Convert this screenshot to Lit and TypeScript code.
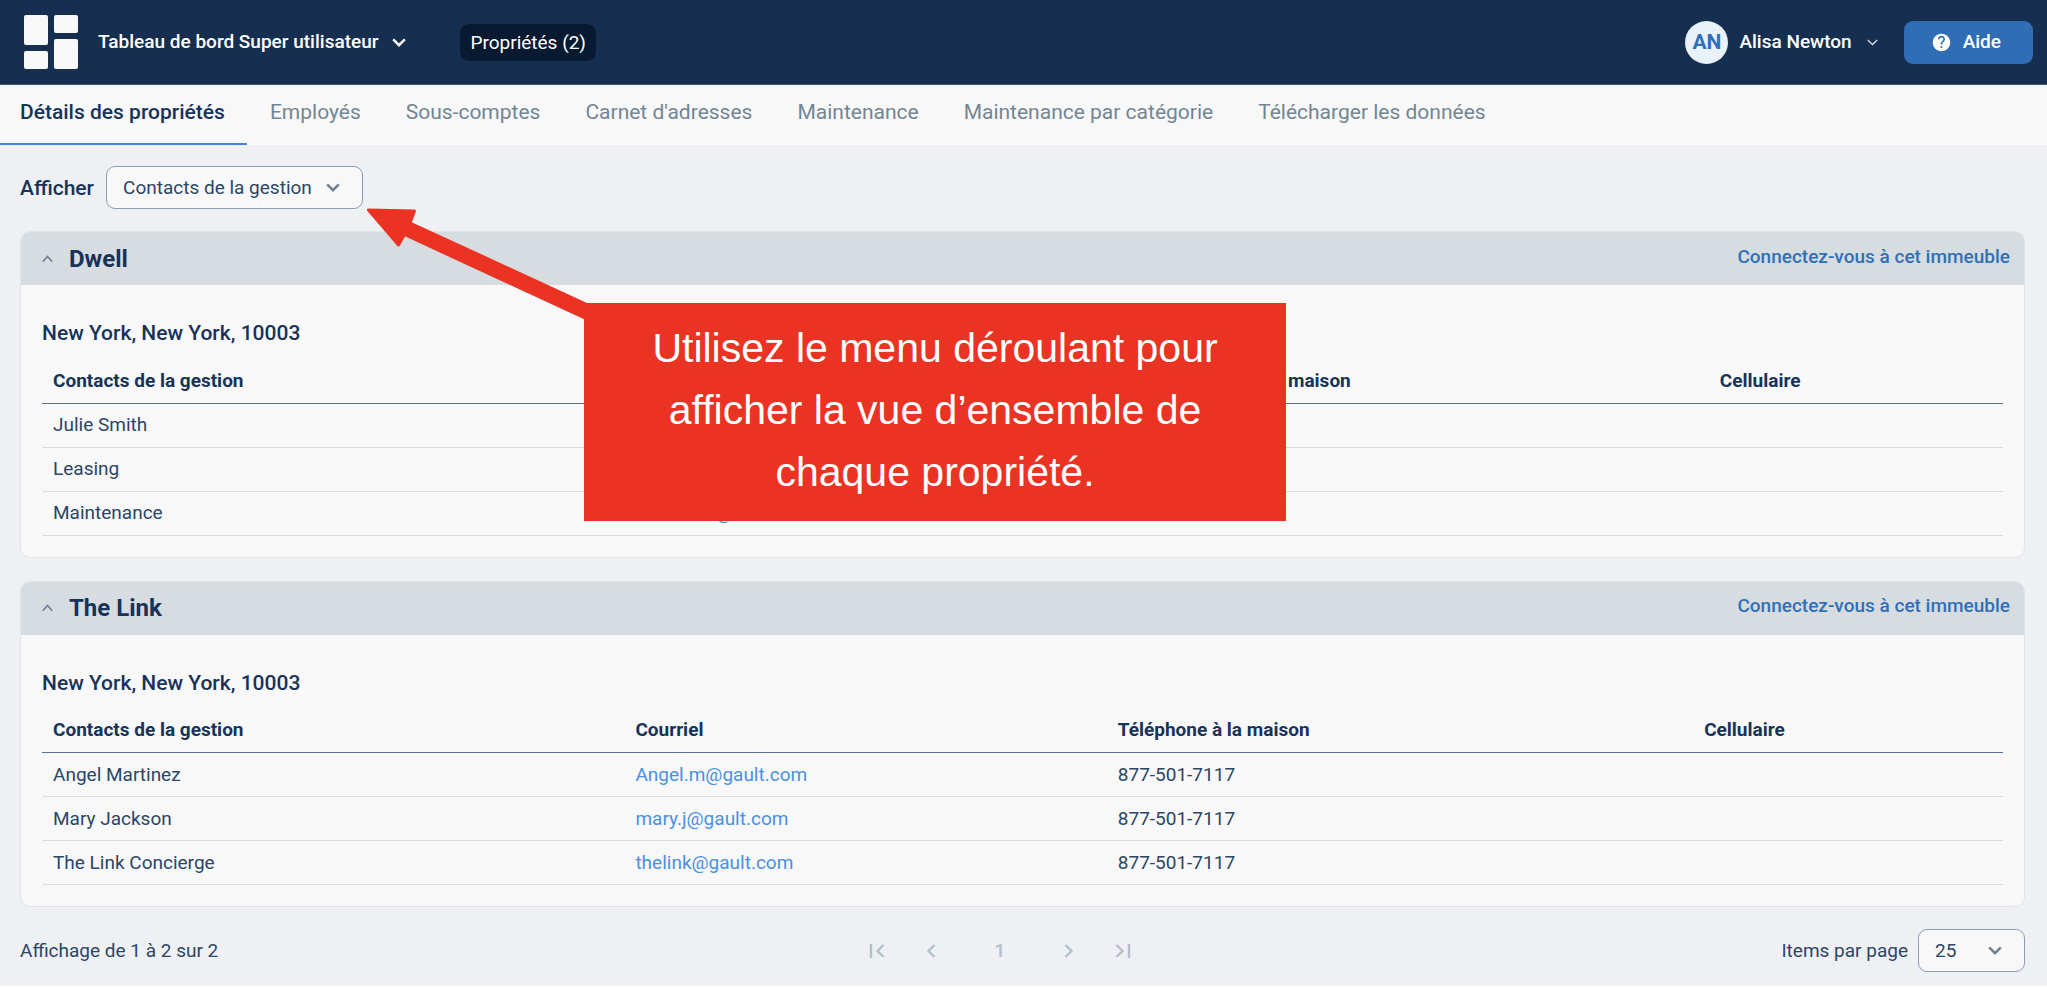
import { LitElement, html, css, svg } from "lit";
import { customElement, property, state } from "lit/decorators.js";
import { classMap } from "lit/directives/class-map.js";

interface Contact {
  name: string;
  email: string;
  home: string;
  cell: string;
}

interface Property {
  name: string;
  address: string;
  columns: number[];
  contacts: Contact[];
}

const TABS = [
  "Détails des propriétés",
  "Employés",
  "Sous-comptes",
  "Carnet d'adresses",
  "Maintenance",
  "Maintenance par catégorie",
  "Télécharger les données",
];

const HEADINGS = ["Contacts de la gestion", "Courriel", "Téléphone à la maison", "Cellulaire"];

const PROPERTIES: Property[] = [
  {
    name: "Dwell",
    address: "New York, New York, 10003",
    columns: [28.2, 28.2, 28.6, 15],
    contacts: [
      { name: "Julie Smith", email: "julie@dwell.com", home: "", cell: "" },
      { name: "Leasing", email: "leasing@dwell.com", home: "", cell: "" },
      { name: "Maintenance", email: "maintenance@dwell.com", home: "", cell: "" },
    ],
  },
  {
    name: "The Link",
    address: "New York, New York, 10003",
    columns: [29.7, 24.6, 29.9, 15.8],
    contacts: [
      { name: "Angel Martinez", email: "Angel.m@gault.com", home: "877-501-7117", cell: "" },
      { name: "Mary Jackson", email: "mary.j@gault.com", home: "877-501-7117", cell: "" },
      { name: "The Link Concierge", email: "thelink@gault.com", home: "877-501-7117", cell: "" },
    ],
  },
];

const shared = css`
  * {
    box-sizing: border-box;
  }
  button {
    font: inherit;
    color: inherit;
    background: none;
    border: 0;
    margin: 0;
    padding: 0;
    cursor: pointer;
  }
  a {
    text-decoration: none;
  }
  svg {
    display: block;
    flex: none;
  }
  .stroke {
    fill: none;
    stroke: currentColor;
    stroke-width: 2.4;
  }
  .select {
    display: grid;
    align-items: center;
    color: #6d7f90;
  }
  .select > * {
    grid-area: 1 / 1;
  }
  .select svg {
    justify-self: end;
    pointer-events: none;
  }
  select {
    appearance: none;
    height: 43px;
    font: 19px/24px Roboto, sans-serif;
    color: #2b4666;
    background: #f8f8f8;
    border: 1px solid #8c9eb3;
    border-radius: 9px;
  }
`;

const chevronDown = () =>
  svg`<svg class="stroke" width="14" height="9" viewBox="0 0 14 9"><path d="M1.2 1.4 7 7.2l5.8-5.8" /></svg>`;

@customElement("app-header")
export class AppHeader extends LitElement {
  static styles = [
    shared,
    css`
      :host {
        display: block;
        background: #162f50;
        border-bottom: 1px solid #425a7a;
        color: #fff;
        font: 500 19px/24px Roboto, sans-serif;
      }
      .bar {
        display: flex;
        align-items: center;
        height: 84px;
        padding: 0 14px 0 24px;
      }
      .menu {
        display: flex;
        align-items: center;
        gap: 14px;
        margin-left: 20px;
      }
      .badge {
        margin-left: 54px;
        padding: 6px 10px;
        border-radius: 9px;
        background: #071a31;
        line-height: 25px;
        font-weight: 400;
      }
      .user {
        display: flex;
        align-items: center;
        margin-left: auto;
      }
      .avatar {
        display: grid;
        place-items: center;
        width: 43px;
        height: 43px;
        margin-right: 11px;
        border-radius: 50%;
        background: #e9f1f9;
        color: #2f70b7;
        font-size: 21px;
        font-weight: 700;
      }
      .user svg {
        margin-left: 15px;
        color: #cfd8e2;
      }
      .help {
        display: flex;
        align-items: center;
        gap: 12px;
        height: 43px;
        margin-left: 26px;
        padding: 0 32px 0 28px;
        border-radius: 9px;
        background: #2f6db5;
      }
    `,
  ];

  render() {
    return html`
      <header class="bar">
        <svg width="54" height="54" viewBox="0 0 54 54" fill="#f8f8f8" aria-hidden="true">
          <rect width="24" height="30" rx="2" />
          <rect y="36" width="24" height="18" rx="2" />
          <rect x="30" width="24" height="18" rx="2" />
          <rect x="30" y="24" width="24" height="30" rx="2" />
        </svg>
        <button class="menu">Tableau de bord Super utilisateur ${chevronDown()}</button>
        <span class="badge">Propriétés (2)</span>
        <button class="user">
          <span class="avatar">AN</span>
          <span>Alisa Newton</span>
          <svg class="stroke" width="11" height="7" viewBox="0 0 11 7"><path d="M.8 1l4.7 4.6L10.2 1" stroke-width="1.4" /></svg>
        </button>
        <button class="help">
          <svg width="19" height="19" viewBox="0 0 24 24" aria-hidden="true">
            <path
              fill="#fff"
              d="M12 1C5.92 1 1 5.92 1 12s4.92 11 11 11 11-4.92 11-11S18.080 1 12 1zm1.100 18h-2.200v-2.200h2.200V19zm2.280-8.520-.99 1.010c-.79.800-1.290 1.460-1.290 3.110h-2.200v-.55c0-1.210.5-2.310 1.290-3.110l1.360-1.390c.41-.39.65-.94.65-1.550 0-1.210-.99-2.200-2.200-2.200s-2.200.99-2.200 2.200H7.600c0-2.430 1.970-4.400 4.400-4.400s4.400 1.970 4.400 4.400c0 .97-.4 1.850-1.020 2.480z"
            />
          </svg>
          Aide
        </button>
      </header>
    `;
  }
}

@customElement("property-card")
export class PropertyCard extends LitElement {
  @property({ attribute: false }) item!: Property;

  static styles = [
    shared,
    css`
      :host {
        display: block;
        border: 1px solid #e1e5e8;
        border-radius: 10px;
        overflow: hidden;
        background: #f8f8f8;
        color: #173358;
        font: 19px/24px Roboto, sans-serif;
      }
      .head {
        display: flex;
        align-items: center;
        justify-content: space-between;
        height: 53px;
        padding: 0 14px 0 21px;
        background: #d7dce1;
      }
      .toggle {
        display: flex;
        align-items: center;
        gap: 16px;
      }
      .toggle svg {
        color: #6d7f90;
      }
      h2 {
        margin: 0;
        font-size: 24px;
        line-height: 30px;
        font-weight: 700;
      }
      .connect {
        padding-bottom: 4px;
        color: #2f70b7;
        font-weight: 500;
      }
      .body {
        padding: 21px;
      }
      h3 {
        margin: 0;
        padding: 13px 0 12px;
        font-size: 21px;
        line-height: 28px;
        font-weight: 500;
      }
      table {
        width: 100%;
        border-collapse: collapse;
        table-layout: fixed;
      }
      th,
      td {
        height: 44px;
        padding: 0 11px;
        text-align: left;
        border-bottom: 1px solid #d5dbe0;
      }
      th {
        font-weight: 700;
        border-bottom-color: #587390;
      }
      td {
        color: #2b4666;
      }
      td a {
        color: #4a90e2;
      }
    `,
  ];

  render() {
    const { name, address, columns, contacts } = this.item;
    return html`
      <div class="head">
        <button class="toggle" aria-expanded="true">
          <svg class="stroke" width="11" height="8" viewBox="0 0 11 8"><path d="M.8 6.800l4.700-5.300 4.700 5.300" stroke-width="1.600" /></svg>
          <h2>${name}</h2>
        </button>
        <a class="connect" href="#connect">Connectez-vous à cet immeuble</a>
      </div>
      <div class="body">
        <h3>${address}</h3>
        <table>
          <colgroup>
            ${columns.map((w) => html`<col style="width:${w}%" />`)}
          </colgroup>
          <thead>
            <tr>${HEADINGS.map((h) => html`<th scope="col">${h}</th>`)}</tr>
          </thead>
          <tbody>
            ${contacts.map(
              (c) => html`<tr>
                <td>${c.name}</td>
                <td><a href="mailto:${c.email}">${c.email}</a></td>
                <td>${c.home}</td>
                <td>${c.cell}</td>
              </tr>`
            )}
          </tbody>
        </table>
      </div>
    `;
  }
}

@customElement("app-root")
export class AppRoot extends LitElement {
  @state() private tab = 0;

  static styles = [
    shared,
    css`
      :host {
        display: block;
        position: relative;
        background: #eef0f3;
        color: #173358;
        font: 19px/24px Roboto, sans-serif;
      }
      .tabs {
        display: flex;
        gap: 3px;
        background: #f8f8f8;
      }
      .tab {
        padding: 14px 22px 18px 20px;
        border-bottom: 2px solid transparent;
        font-size: 21px;
        line-height: 26px;
        color: #738593;
        white-space: nowrap;
      }
      .tab.active {
        color: #173358;
        font-weight: 500;
        border-bottom-color: #3f87dc;
      }
      .filter {
        display: flex;
        align-items: center;
        gap: 12px;
        padding: 21px 20px 22px;
      }
      .filter label {
        font-size: 21px;
        font-weight: 500;
      }
      .filter select {
        padding: 0 50px 0 16px;
      }
      .filter svg {
        margin-right: 23px;
      }
      .cards {
        display: grid;
        gap: 23px;
        padding: 0 22px 0 20px;
      }
      .footer {
        display: flex;
        align-items: center;
        justify-content: space-between;
        padding: 22px 22px 14px 20px;
        color: #2b4666;
      }
      .pager {
        display: flex;
        align-items: center;
        gap: 11px;
        color: #b3bfca;
      }
      .pager button {
        display: grid;
        place-items: center;
        width: 43px;
        height: 43px;
      }
      .pager .page {
        margin: 0 15px;
        font-weight: 500;
      }
      .per-page {
        display: flex;
        align-items: center;
        gap: 10px;
      }
      .per-page select {
        width: 107px;
        padding: 0 16px;
      }
      .per-page .select svg {
        margin-right: 23px;
      }
      .callout {
        position: absolute;
        top: 303px;
        left: 584px;
        width: 702px;
        margin: 0;
        padding: 14px 60px 18px;
        background: #eb3323;
        color: #fff;
        font: 41px/62px "Liberation Sans", Arial, sans-serif;
        text-align: center;
      }
      .arrow {
        position: absolute;
        top: -97px;
        left: -220px;
      }
    `,
  ];

  render() {
    return html`
      <app-header></app-header>
      <nav class="tabs">
        ${TABS.map(
          (t, i) => html`<button
            class=${classMap({ tab: true, active: i === this.tab })}
            @click=${() => (this.tab = i)}
          >${t}</button>`
        )}
      </nav>
      <main>
        <div class="filter">
          <label for="view">Afficher</label>
          <div class="select">
            <select id="view"><option>Contacts de la gestion</option></select>
            ${chevronDown()}
          </div>
        </div>
        <div class="cards">
          ${PROPERTIES.map((p) => html`<property-card .item=${p}></property-card>`)}
        </div>
      </main>
      <footer class="footer">
        <span>Affichage de 1 à 2 sur 2</span>
        <nav class="pager" aria-label="Pagination">
          <button aria-label="Première page">
            <svg class="stroke" width="16" height="16" viewBox="0 0 16 16"><path d="M2 1v14M14.500 2 8.500 8l6 6" /></svg>
          </button>
          <button aria-label="Page précédente">
            <svg class="stroke" width="10" height="16" viewBox="0 0 10 16"><path d="M8.500 2l-6 6 6 6" /></svg>
          </button>
          <button class="page" aria-current="page">1</button>
          <button aria-label="Page suivante">
            <svg class="stroke" width="10" height="16" viewBox="0 0 10 16"><path d="M1.500 2l6 6-6 6" /></svg>
          </button>
          <button aria-label="Dernière page">
            <svg class="stroke" width="16" height="16" viewBox="0 0 16 16"><path d="M14 1v14M1.500 2l6 6-6 6" /></svg>
          </button>
        </nav>
        <div class="per-page">
          <label for="size">Items par page</label>
          <div class="select">
            <select id="size"><option>25</option></select>
            ${chevronDown()}
          </div>
        </div>
      </footer>
      <p class="callout">
        <svg class="arrow" width="226" height="116" viewBox="364 206 226 116" aria-hidden="true">
          <path
            fill="#eb3323"
            stroke="#eb3323"
            stroke-width="3"
            stroke-linejoin="round"
            d="M368.500 210 414.500 211 410 223 588 305v14.500L404.500 234.500 398.500 245z"
          />
        </svg>
        Utilisez le menu déroulant pour afficher la vue d’ensemble de chaque propriété.
      </p>
    `;
  }
}
